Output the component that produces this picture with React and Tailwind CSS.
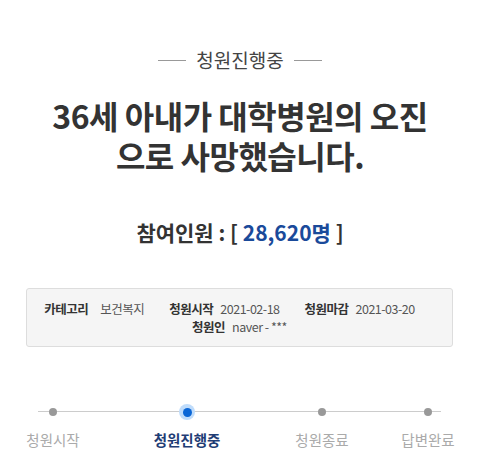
export default function App() {
  const steps = [
    { label: "청원시작", w: "w-[52px]", ml: "ml-0", active: false },
    { label: "청원진행중", w: "w-[80px]", ml: "ml-[68px]", active: true },
    { label: "청원종료", w: "w-[80px]", ml: "ml-[55px]", active: false },
    { label: "답변완료", w: "w-[60px]", ml: "ml-[36px]", active: false },
  ];

  return (
    <div
      className="w-[480px] h-[469px] bg-white overflow-hidden text-[#333]"
      style={{ fontFamily: '"Noto Sans CJK KR", "Noto Sans", sans-serif' }}
    >
      {/* status heading with rules on both sides */}
      <div className="pt-[47px] flex items-center justify-center gap-[10px]">
        <span className="block w-[28px] h-px bg-[#999]" />
        <span className="text-[19px] leading-[26px] text-[#444]">청원진행중</span>
        <span className="block w-[28px] h-px bg-[#999]" />
      </div>

      {/* petition title */}
      <h1 className="mt-[22px] text-center text-[32px] leading-[40px] font-bold tracking-[-0.5px] text-[#333]">
        36세 아내가 대학병원의 오진
        <br />
        으로 사망했습니다.
      </h1>

      {/* participant count */}
      <div className="mt-[42px] text-center text-[21px] leading-[30px] font-bold text-[#333]">
        참여인원 : [ <span className="text-[#1a4a9a]">28,620명</span> ]
      </div>

      {/* details box */}
      <div className="mt-[41px] mx-[26px] w-[427px] h-[59px] bg-[#f5f5f5] border border-[#ddd] rounded-[3px] flex flex-col items-center justify-center text-[12.5px] leading-[18px] tracking-[-0.5px]">
        <div className="flex">
          <span className="font-bold text-[#333]">카테고리</span>
          <span className="ml-[12px] mr-[25px] text-[#555]">보건복지</span>
          <span className="font-bold text-[#333]">청원시작</span>
          <span className="ml-[7px] mr-[25px] text-[#555]">2021-02-18</span>
          <span className="font-bold text-[#333]">청원마감</span>
          <span className="ml-[7px] mr-[20px] text-[#555]">2021-03-20</span>
        </div>
        <div className="flex">
          <span className="font-bold text-[#333]">청원인</span>
          <span className="ml-[7px] text-[#555]">naver - ***</span>
        </div>
      </div>

      {/* progress steps */}
      <div className="relative mt-[57px]">
        <div className="absolute left-[38px] w-[403px] top-[7px] h-px bg-[#ccc]" />
        <div className="relative flex pl-[27px]">
          {steps.map((s) => (
            <div key={s.label} className={`${s.w} ${s.ml} flex flex-col items-center`}>
              <div className="h-[16px] flex items-center justify-center">
                {s.active ? (
                  <span className="w-[16px] h-[16px] rounded-full bg-[#bfdcfb] flex items-center justify-center">
                    <span className="w-[9px] h-[9px] rounded-full bg-[#0a66d6]" />
                  </span>
                ) : (
                  <span className="w-[8px] h-[8px] rounded-full bg-[#999]" />
                )}
              </div>
              <span
                className={`mt-[10px] text-[14.5px] leading-[20px] whitespace-nowrap ${
                  s.active ? "font-bold text-[#1f3d75]" : "text-[#aaa]"
                }`}
              >
                {s.label}
              </span>
            </div>
          ))}
        </div>
      </div>
    </div>
  );
}
